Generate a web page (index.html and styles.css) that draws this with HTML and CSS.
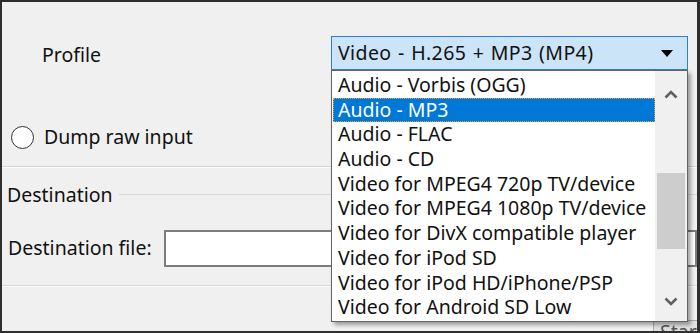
FILE: index.html
```html
<!DOCTYPE html>
<html>
<head>
<meta charset="utf-8">
<link rel="stylesheet" href="styles.css">
</head>
<body>
<div class="frame">
  <div class="row profile-row">
    <span class="label profile-label">Profile</span>
    <div class="combo">
      <span class="combo-text">Video - H.265 + MP3 (MP4)</span>
      <svg class="combo-arrow" width="12" height="7" viewBox="0 0 12 7"><path d="M0 0 H12 L6 7 Z" fill="#000"/></svg>
    </div>
  </div>
  <div class="row radio-row">
    <span class="radio"></span>
    <span class="label">Dump raw input</span>
  </div>
  <div class="sep sep-top"></div>
  <div class="group-title">
    <span class="label">Destination</span>
    <span class="group-line"></span>
  </div>
  <div class="row dest-row">
    <span class="label dest-label">Destination file:</span>
    <div class="input"></div>
  </div>
  <div class="sep sep-bottom"></div>
  <div class="footer">
    <div class="start-btn">Start</div>
  </div>

  <div class="dropdown">
    <ul class="list">
      <li>Audio - Vorbis (OGG)</li>
      <li class="selected">Audio - MP3</li>
      <li>Audio - FLAC</li>
      <li>Audio - CD</li>
      <li>Video for MPEG4 720p TV/device</li>
      <li>Video for MPEG4 1080p TV/device</li>
      <li>Video for DivX compatible player</li>
      <li>Video for iPod SD</li>
      <li>Video for iPod HD/iPhone/PSP</li>
      <li>Video for Android SD Low</li>
    </ul>
    <div class="scrollbar">
      <svg class="sb-arrow sb-up" width="14" height="9" viewBox="0 0 14 9"><path d="M1.5 7.5 L7 2 L12.5 7.5" fill="none" stroke="#606060" stroke-width="2.6"/></svg>
      <div class="sb-track"><div class="sb-thumb"></div></div>
      <svg class="sb-arrow sb-down" width="14" height="9" viewBox="0 0 14 9"><path d="M1.5 1.5 L7 7 L12.5 1.5" fill="none" stroke="#606060" stroke-width="2.6"/></svg>
    </div>
  </div>
</div>
</body>
</html>
```
FILE: styles.css
```css
html, body {
  margin: 0;
  padding: 0;
  background: #f0f0f0;
}
body {
  width: 700px;
  height: 333px;
  overflow: hidden;
  font-family: "Noto Sans", "Open Sans", sans-serif;
  font-size: 19.5px;
  color: #111;
}
.frame {
  position: relative;
  box-sizing: border-box;
  width: 700px;
  height: 333px;
  border: 2px solid #2e2e2e;
  border-right-width: 3px;
  background: #f0f0f0;
  overflow: hidden;
}
.row {
  display: flex;
  align-items: center;
}
.label {
  white-space: nowrap;
  line-height: 24px;
}
.profile-row {
  margin-top: 34px;
  height: 34px;
  padding-left: 40px;
}
.profile-label {
  width: 289px;
  padding-top: 4px;
}
.combo {
  box-sizing: border-box;
  width: 357px;
  height: 34px;
  background: #cce4f7;
  border: 1px solid #2f7fcf;
  display: flex;
  align-items: center;
  padding-left: 6px;
  padding-right: 14px;
}
.combo-text {
  flex: 1;
  white-space: nowrap;
  line-height: 24px;
  letter-spacing: 0.4px;
  word-spacing: 1px;
}
.combo-arrow {
  display: block;
}
.radio-row {
  margin-top: 56px;
  height: 22px;
  padding-left: 9px;
}
.radio {
  box-sizing: border-box;
  width: 23px;
  height: 23px;
  border-radius: 50%;
  border: 1.6px solid #333;
  background: #fff;
  margin-right: 10px;
}
.sep {
  height: 1px;
  background: #d7d7d7;
  border-bottom: 1px solid #fcfcfc;
}
.sep-top {
  margin-top: 18px;
}
.group-title {
  display: flex;
  align-items: center;
  margin-top: 16px;
  padding-left: 5px;
  height: 22px;
}
.group-line {
  flex: 1;
  height: 1px;
  background: #d7d7d7;
  margin-left: 6px;
  margin-top: -2px;
}
.dest-row {
  margin-top: 24px;
  height: 36px;
  padding-left: 6px;
}
.dest-label {
  width: 156px;
}
.input {
  box-sizing: border-box;
  flex: 1;
  height: 37px;
  border: 2px solid #7d7d7d;
  background: #fff;
}
.sep-bottom {
  margin-top: 19px;
}
.footer {
  display: flex;
  justify-content: flex-end;
  padding-top: 33px;
}
.start-btn {
  box-sizing: border-box;
  width: 44px;
  height: 30px;
  border-top: 1px solid #adadad;
  border-left: 1px solid #adadad;
  background: #e1e1e1;
  color: #555;
  padding-left: 6px;
  line-height: 22px;
  white-space: nowrap;
  overflow: hidden;
}
.dropdown {
  position: absolute;
  left: 329px;
  top: 68px;
  width: 357px;
  height: 252px;
  box-sizing: border-box;
  background: #fff;
  border: 1px solid #646464;
  box-shadow: 3px 3px 4px rgba(0, 0, 0, 0.35);
  display: flex;
}
.list {
  list-style: none;
  margin: 0;
  padding: 2px 0 0 1px;
  flex: 1;
}
.list li {
  box-sizing: border-box;
  height: 24.7px;
  line-height: 24px;
  padding-left: 5px;
  white-space: nowrap;
  color: #111;
}
.list li.selected {
  background: #0078d7;
  color: #fff;
  outline: 1px dotted #f0a030;
  outline-offset: -1px;
}
.scrollbar {
  width: 32px;
  background: #f0f0f0;
  display: flex;
  flex-direction: column;
  align-items: center;
}
.sb-up {
  display: block;
  margin: 19px 0 11px;
}
.sb-down {
  display: block;
  margin: 11px 0 15px;
}
.sb-track {
  flex: 1;
  width: 100%;
}
.sb-thumb {
  margin: 63px 2px 0 2px;
  height: 76px;
  background: #cdcdcd;
}
```
